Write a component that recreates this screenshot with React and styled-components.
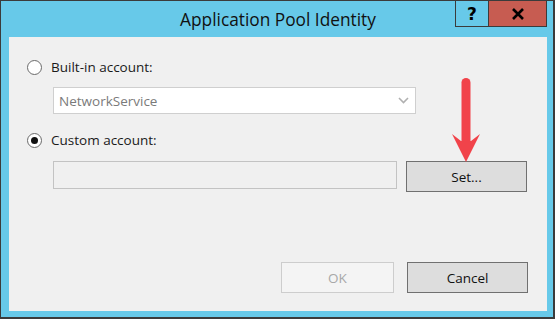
import React from 'react';
import styled, { createGlobalStyle } from 'styled-components';

const GlobalStyle = createGlobalStyle`
  html, body {
    margin: 0;
    padding: 0;
    background: #ffffff;
  }
  * {
    box-sizing: border-box;
  }
`;

const Window = styled.div`
  width: 555px;
  height: 319px;
  display: flex;
  flex-direction: column;
  background: #67c9e9;
  border: 1px solid #3b3b3b;
  border-bottom-width: 2px;
  border-right-width: 2px;
  padding: 0 6px 6px 8px;
  font-family: "Open Sans", "Noto Sans", sans-serif;
  color: #000;
`;

const TitleBar = styled.div`
  height: 36px;
  display: flex;
  align-items: flex-start;
  position: relative;
`;

const Title = styled.div`
  flex: 1;
  text-align: center;
  font-size: 17.3px;
  line-height: 20px;
  padding-top: 9px;
  color: #111;
`;

const Controls = styled.div`
  position: absolute;
  right: 0;
  top: -1px;
  display: flex;
`;

const CtrlButton = styled.div`
  width: ${p => p.$w}px;
  height: 27px;
  display: flex;
  align-items: center;
  justify-content: center;
  background: ${p => (p.$close ? '#c75c51' : 'transparent')};
  border: 1px solid #3b3b3b;
  border-left-width: ${p => (p.$close ? 0 : 1)}px;
  font-family: "DejaVu Sans", sans-serif;
  font-weight: bold;
  font-size: 17px;
  color: #000;
`;

const Content = styled.div`
  flex: 1;
  position: relative;
  background: #f0f0f0;
  padding: 22px 19px 0 18px;
  display: flex;
  flex-direction: column;
  font-size: 13.5px;
`;

const RadioRow = styled.label`
  display: flex;
  align-items: center;
  height: 16px;
  margin-top: ${p => p.$mt || 0}px;
  gap: 9px;
  color: #1a1a1a;
`;

const Radio = styled.span`
  width: 15px;
  height: 15px;
  border-radius: 50%;
  border: 1px solid #6a6a6a;
  background: #fff;
  display: flex;
  align-items: center;
  justify-content: center;
  &::after {
    content: '';
    width: 7px;
    height: 7px;
    border-radius: 50%;
    background: ${p => (p.$checked ? '#111' : 'transparent')};
  }
`;

const Indent = styled.div`
  display: flex;
  align-items: flex-start;
  margin-left: 26px;
  margin-top: ${p => p.$mt || 0}px;
  gap: 9px;
`;

const Select = styled.div`
  width: 363px;
  height: 27px;
  border: 1px solid #cfcfcf;
  background: #fff;
  display: flex;
  align-items: center;
  justify-content: space-between;
  padding: 0 6px 0 5px;
  color: #7a7a7a;
`;

const Field = styled.div`
  width: 344px;
  height: 28px;
  border: 1px solid #c3c3c3;
  background: #f0f0f0;
`;

const Button = styled.div`
  width: ${p => p.$w}px;
  height: 31px;
  display: flex;
  align-items: center;
  justify-content: center;
  border: 1px solid ${p => (p.$disabled ? '#cdcdcd' : '#707070')};
  background: ${p => (p.$disabled ? '#f4f4f4' : '#dddddd')};
  color: ${p => (p.$disabled ? '#a8a8a8' : '#111')};
`;

const Footer = styled.div`
  display: flex;
  justify-content: flex-end;
  gap: 13px;
  margin-top: 70px;
`;

const Arrow = styled.svg`
  position: absolute;
  left: 442px;
  top: 39px;
`;

const Chevron = () => (
  <svg width="11" height="7" viewBox="0 0 11 7">
    <path d="M1 1 L5.5 5.5 L10 1" fill="none" stroke="#b0b0b0" strokeWidth="1.6" />
  </svg>
);

const CloseGlyph = () => (
  <svg width="14" height="12" viewBox="0 0 14 12">
    <path d="M2 1 L12 11 M12 1 L2 11" stroke="#000" strokeWidth="2.6" />
  </svg>
);

const App = () => {
  return (
    <>
      <GlobalStyle />
      <Window>
        <TitleBar>
          <Title>Application Pool Identity</Title>
          <Controls>
            <CtrlButton $w={34}>?</CtrlButton>
            <CtrlButton $w={58} $close><CloseGlyph /></CtrlButton>
          </Controls>
        </TitleBar>
        <Content>
          <RadioRow>
            <Radio />
            Built-in account:
          </RadioRow>
          <Indent $mt={12}>
            <Select>
              NetworkService
              <Chevron />
            </Select>
          </Indent>
          <RadioRow $mt={18}>
            <Radio $checked />
            Custom account:
          </RadioRow>
          <Indent $mt={13}>
            <Field />
            <Button $w={121}>Set...</Button>
          </Indent>
          <Footer>
            <Button $w={113} $disabled>OK</Button>
            <Button $w={121}>Cancel</Button>
          </Footer>
          <Arrow width="30" height="88" viewBox="0 0 30 88">
            <line x1="15" y1="6.5" x2="15" y2="66" stroke="#f1434a" strokeWidth="9" strokeLinecap="round" />
            <polygon points="1,58 10,65 20,65 29,58 15,86" fill="#f1434a" />
          </Arrow>
        </Content>
      </Window>
    </>
  );
};

export default App;
